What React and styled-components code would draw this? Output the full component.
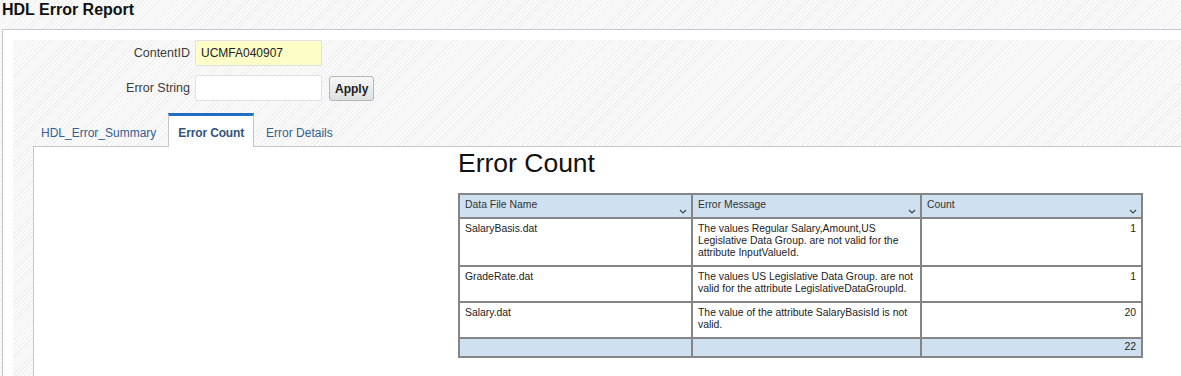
import React from "react";
import styled, { createGlobalStyle } from "styled-components";

const hatch = `repeating-linear-gradient(135deg, #fafafa 0px, #fafafa 2px, #f0f0f0 2px, #f0f0f0 3px)`;

const GlobalStyle = createGlobalStyle`
html, body {
  margin: 0;
  padding: 0;
  height: 100%;
  overflow: hidden;
}
body {
  font-family: "Liberation Sans", Arial, sans-serif;
  background: #fff;
}
#root {
  height: 100%;
}
`;

const Page = styled.div`
height: 100%;
display: flex;
flex-direction: column;
background: ${hatch};
`;

const TitleBar = styled.div`
height: 29px;
padding-left: 2px;
font-size: 16px;
font-weight: 700;
line-height: 20px;
color: #111;
box-sizing: border-box;
`;

const Frame = styled.div`
flex: 1;
display: flex;
margin-left: 2px;
padding: 10px 0 0 10px;
background: #fff;
border-top: 1px solid #c4c8cd;
border-left: 1px solid #c4c8cd;
`;

const Region = styled.div`
flex: 1;
display: flex;
flex-direction: column;
background: ${hatch};
`;

const Form = styled.div`
display: grid;
grid-template-columns: 177px 127px auto;
column-gap: 5px;
row-gap: 8px;
align-items: center;
justify-content: start;
`;

const Label = styled.label`
text-align: right;
font-size: 12.5px;
color: #3c3c3c;
`;

const Input = styled.input`
box-sizing: border-box;
width: 127px;
height: 26px;
padding: 0 5px;
border: 1px solid #dfe1e3;
border-radius: 2px;
background: ${(p) => (p.$highlight ? "#fcfdc7" : "#fff")};
font-family: "Liberation Sans", Arial, sans-serif;
font-size: 12px;
color: #222;
outline: none;
`;

const Button = styled.button`
justify-self: start;
margin-left: 2px;
margin-top: 2px;
height: 25px;
padding: 0 5px;
border: 1px solid #b3b6ba;
border-radius: 3px;
background: linear-gradient(#f7f7f7, #dfe0e1);
font-family: "Liberation Sans", Arial, sans-serif;
font-size: 12px;
font-weight: 700;
color: #1d1d1d;
`;

const TabBar = styled.div`
display: flex;
gap: 2px;
margin-top: 12px;
padding-left: 18px;
position: relative;
z-index: 1;
`;

const Tab = styled.div`
box-sizing: border-box;
height: 34px;
margin-bottom: -1px;
padding: 3px 9px 0;
display: flex;
align-items: center;
font-size: 12px;
font-weight: ${(p) => (p.$active ? 700 : 400)};
letter-spacing: ${(p) => (p.$active ? "-0.15px" : "0")};
color: ${(p) => (p.$active ? "#31557d" : "#33618f")};
background: ${(p) => (p.$active ? "#fff" : "transparent")};
border-top: 3px solid ${(p) => (p.$active ? "#1e6ec2" : "transparent")};
border-left: 1px solid ${(p) => (p.$active ? "#c4c8cd" : "transparent")};
border-right: 1px solid ${(p) => (p.$active ? "#c4c8cd" : "transparent")};
`;

const TabPanel = styled.div`
flex: 1;
margin-left: 20px;
padding: 1px 0 0 424px;
background: #fff;
border-top: 1px solid #c4c8cd;
border-left: 1px solid #c4c8cd;
`;

const Heading = styled.h1`
margin: 0 0 15px 0;
font-size: 26.5px;
font-weight: 400;
line-height: 30px;
color: #111;
`;

const Table = styled.table`
width: 685px;
table-layout: fixed;
border-collapse: separate;
border-spacing: 0;
border: 1px solid #858585;
font-family: "Liberation Sans", Tahoma, sans-serif;
font-size: 10.4px;
line-height: 12px;
color: #222;
`;

const Th = styled.th`
position: relative;
box-sizing: border-box;
width: ${(p) => p.$w}px;
padding: 4px 5px 6px;
border: 1px solid #858585;
background: #cfe0f1;
font-weight: 400;
text-align: left;
vertical-align: top;
color: #333;
`;

const Td = styled.td`
padding: 4px 5px 6px;
border: 1px solid #858585;
vertical-align: top;
text-align: ${(p) => (p.$num ? "right" : "left")};
`;

const TotalCell = styled.td`
padding: 2px 5px 3px;
border: 1px solid #858585;
background: #cfe0f1;
text-align: right;
`;

const Chevron = styled.svg`
position: absolute;
right: 4px;
bottom: 3px;
`;

const SortIcon = () => (
<Chevron width="8" height="5" viewBox="0 0 8 5">
  <polyline points="1,1 4,4 7,1" fill="none" stroke="#444" strokeWidth="1.2" />
</Chevron>
);

const rows = [
{
  file: "SalaryBasis.dat",
  message:
    "The values Regular Salary,Amount,US Legislative Data Group. are not valid for the attribute InputValueId.",
  count: 1,
},
{
  file: "GradeRate.dat",
  message:
    "The values US Legislative Data Group. are not valid for the attribute LegislativeDataGroupId.",
  count: 1,
},
{
  file: "Salary.dat",
  message: "The value of the attribute SalaryBasisId is not valid.",
  count: 20,
},
];

export default function App() {
const total = rows.reduce((s, r) => s + r.count, 0);
return (
  <>
    <GlobalStyle />
    <Page>
      <TitleBar>HDL Error Report</TitleBar>
      <Frame>
        <Region>
          <Form>
            <Label>ContentID</Label>
            <Input $highlight defaultValue="UCMFA040907" />
            <span />
            <Label>Error String</Label>
            <Input />
            <Button>Apply</Button>
          </Form>
          <TabBar>
            <Tab>HDL_Error_Summary</Tab>
            <Tab $active>Error Count</Tab>
            <Tab>Error Details</Tab>
          </TabBar>
          <TabPanel>
            <Heading>Error Count</Heading>
            <Table>
              <thead>
                <tr>
                  <Th $w={233}>
                    Data File Name
                    <SortIcon />
                  </Th>
                  <Th $w={229}>
                    Error Message
                    <SortIcon />
                  </Th>
                  <Th $w={221}>
                    Count
                    <SortIcon />
                  </Th>
                </tr>
              </thead>
              <tbody>
                {rows.map((r) => (
                  <tr key={r.file}>
                    <Td>{r.file}</Td>
                    <Td>{r.message}</Td>
                    <Td $num>{r.count}</Td>
                  </tr>
                ))}
                <tr>
                  <TotalCell />
                  <TotalCell />
                  <TotalCell>{total}</TotalCell>
                </tr>
              </tbody>
            </Table>
          </TabPanel>
        </Region>
      </Frame>
    </Page>
  </>
);
}
